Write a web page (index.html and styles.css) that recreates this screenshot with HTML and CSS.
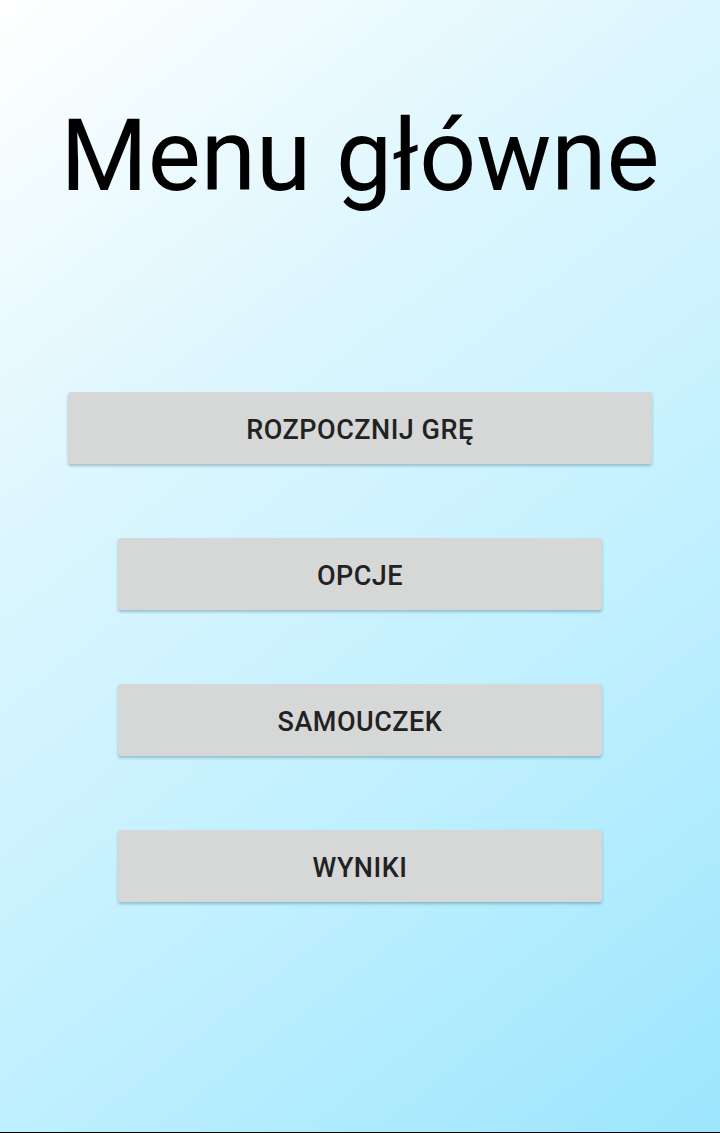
FILE: index.html
```html
<!DOCTYPE html>
<html lang="pl">
<head>
<meta charset="utf-8">
<link rel="stylesheet" href="styles.css">
<title>Menu główne</title>
</head>
<body>
<main class="screen">
  <h1 class="title">Menu główne</h1>
  <nav class="menu">
    <button class="btn btn-wide">ROZPOCZNIJ GRĘ</button>
    <button class="btn">OPCJE</button>
    <button class="btn">SAMOUCZEK</button>
    <button class="btn">WYNIKI</button>
  </nav>
</main>
</body>
</html>
```
FILE: styles.css
```css
html, body {
  margin: 0;
  padding: 0;
}
body {
  width: 720px;
  height: 1133px;
  overflow: hidden;
}
.screen {
  box-sizing: border-box;
  width: 720px;
  height: 1133px;
  border-bottom: 1px solid #000;
  background: linear-gradient(142deg, #ffffff 0%, #dcf6fe 33%, #bff0ff 66%, #9ce5fd 100%);
  display: flex;
  flex-direction: column;
  align-items: center;
  font-family: Roboto, "Liberation Sans", sans-serif;
}
.title {
  margin: 97px 0 0;
  font-family: Roboto, sans-serif;
  font-weight: 400;
  font-size: 100px;
  line-height: 117px;
  color: #000;
  text-align: center;
}
.menu {
  margin-top: 178px;
  display: flex;
  flex-direction: column;
  align-items: center;
  gap: 74px;
}
.btn {
  width: 484px;
  height: 72px;
  border: none;
  border-radius: 3px;
  background: #d6d7d7;
  box-shadow: 0 2px 3px rgba(40, 90, 110, 0.35);
  font-family: Roboto, sans-serif;
  font-weight: 500;
  font-size: 27px;
  letter-spacing: 0.5px;
  color: #222;
  padding: 3px 0 0;
}
.btn-wide {
  width: 584px;
}
```
